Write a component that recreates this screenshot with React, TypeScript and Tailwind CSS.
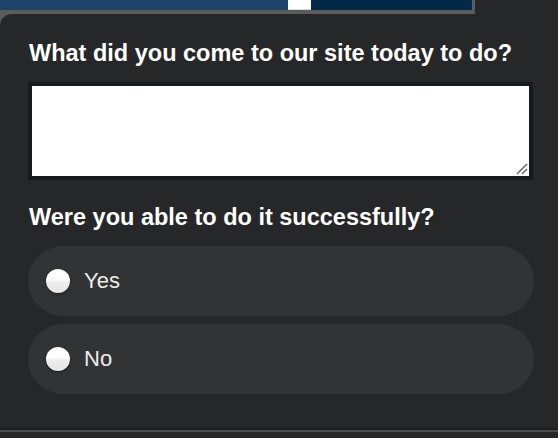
import React from "react";

function Radio({ label }: { label: string }) {
  return (
    <div className="flex h-[70px] items-center rounded-full bg-[#323335] pl-[18px]">
      <span className="h-[24px] w-[24px] rounded-full bg-[linear-gradient(to_bottom,#ffffff_0%,#fdfdfd_42%,#ececec_58%,#e6e6e6_100%)] shadow-[0_1px_2px_rgba(0,0,0,0.55)]" />
      <span className="ml-[14px] text-[22px] leading-none text-[#ececec]">{label}</span>
    </div>
  );
}

export default function App() {
  return (
    <div
      className="h-[438px] w-[558px] overflow-hidden bg-[#262728]"
      style={{ fontFamily: '"Liberation Sans", Arial, Helvetica, sans-serif' }}
    >
      <div className="h-[24px] w-[475px] bg-[#5a5c5c] pr-[3px]">
        <div className="flex h-[10px]">
          <div className="w-[288px] bg-[#1f4268]" />
          <div className="w-[23px] border-b border-[#dcdcdc] bg-white" />
          <div className="flex-1 bg-[#002a48]" />
        </div>
      </div>
      <div className="relative -mt-[10px] h-[424px] rounded-tl-[12px] bg-[#262728]">
        <div className="h-[414px] px-[28px] pt-[25px]">
          <h2 className="pl-[1px] text-[23.5px] font-bold leading-[28px] text-white">
            What did you come to our site today to do?
          </h2>
          <div className="relative mt-[15px] h-[98px] w-[505px] border-[4px] border-[#18191a] bg-white">
            <svg className="absolute bottom-[1px] right-[1px]" width="12" height="12" viewBox="0 0 12 12">
              <line x1="1" y1="11" x2="11" y2="1" stroke="#6b6b6b" strokeWidth="1.6" />
              <line x1="6" y1="11" x2="11" y2="6" stroke="#6b6b6b" strokeWidth="1.6" />
            </svg>
          </div>
          <h2 className="mt-[23px] pl-[1px] text-[23.5px] font-bold leading-[28px] text-white">
            Were you able to do it successfully?
          </h2>
          <div className="mt-[15px] flex w-[506px] flex-col gap-[8px]">
            <Radio label="Yes" />
            <Radio label="No" />
          </div>
        </div>
        <div className="h-[2px] bg-[#1c1d1e]" />
        <div className="h-[2px] bg-[#4b4c4d]" />
      </div>
    </div>
  );
}
